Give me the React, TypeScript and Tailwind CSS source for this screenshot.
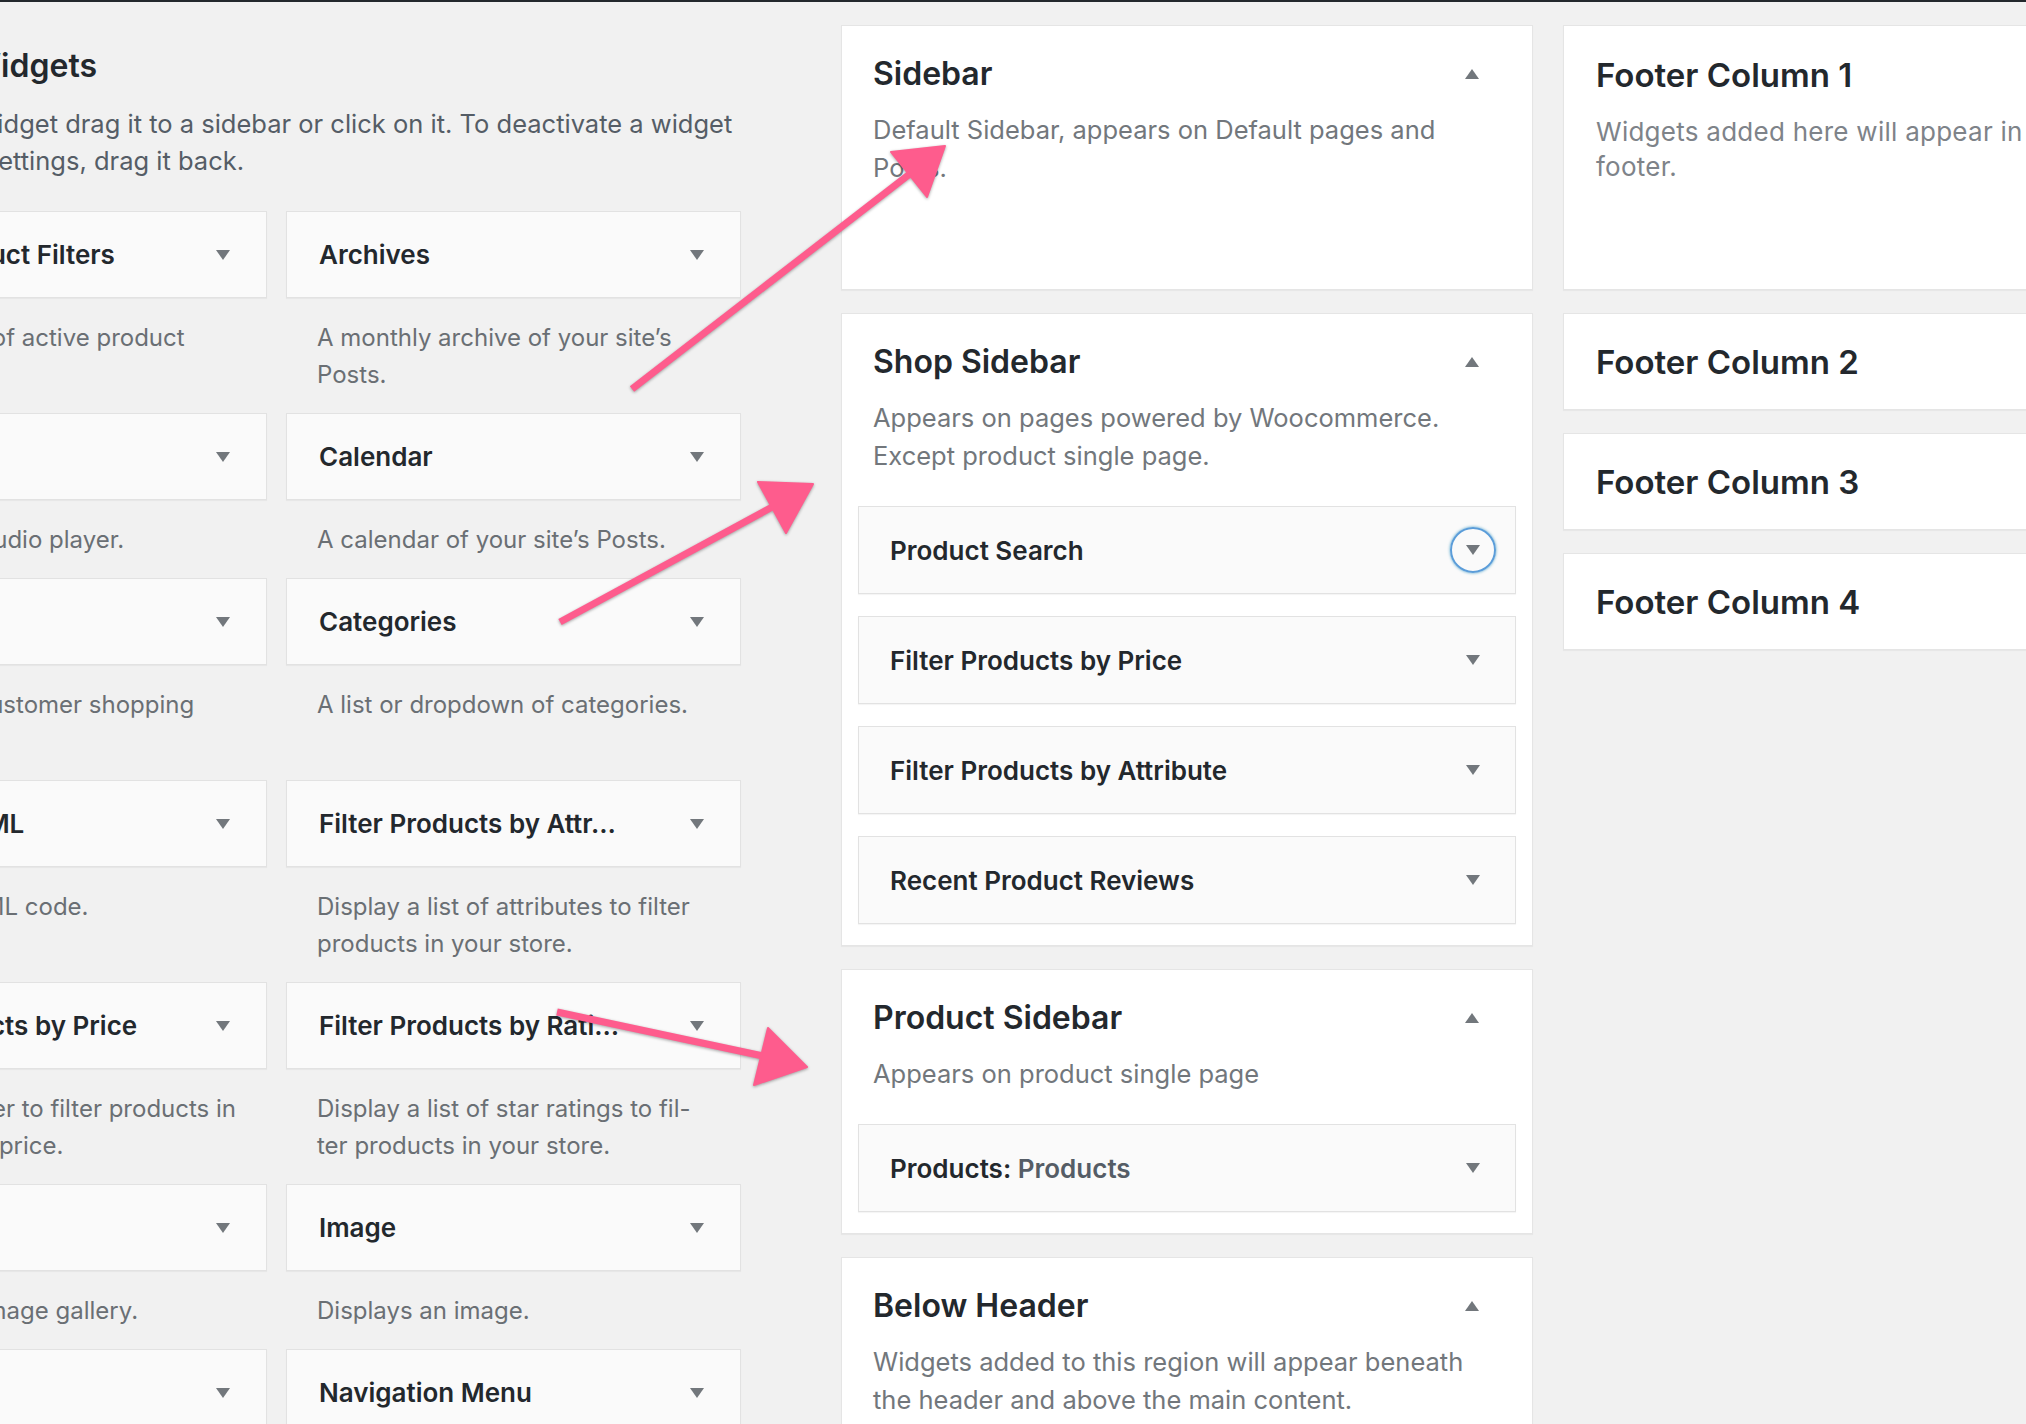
import React from "react";

const Down = () => (
  <svg width="14" height="10" viewBox="0 0 14 10" aria-hidden="true">
    <polygon points="0,0 14,0 7,10" fill="#72777c" />
  </svg>
);

const Up = () => (
  <svg width="14" height="10" viewBox="0 0 14 10" aria-hidden="true">
    <polygon points="0,10 14,10 7,0" fill="#72777c" />
  </svg>
);

type Avail = { title: string; lines: string[] };

const available: Avail[] = [
  { title: "Active Product Filters", lines: ["Display a list of active product", "filters."] },
  { title: "Archives", lines: ["A monthly archive of your site\u2019s", "Posts."] },
  { title: "Audio", lines: ["Displays an audio player."] },
  { title: "Calendar", lines: ["A calendar of your site\u2019s Posts."] },
  { title: "Cart", lines: ["Display the customer shopping", "cart."] },
  { title: "Categories", lines: ["A list or dropdown of categories."] },
  { title: "Custom HTML", lines: ["Arbitrary HTML code."] },
  { title: "Filter Products by Attr\u2026", lines: ["Display a list of attributes to filter", "products in your store."] },
  { title: "Filter Products by Price", lines: ["Display a slider to filter products in", "your store by price."] },
  { title: "Filter Products by Rati\u2026", lines: ["Display a list of star ratings to fil-", "ter products in your store."] },
  { title: "Gallery", lines: ["Displays an image gallery."] },
  { title: "Image", lines: ["Displays an image."] },
  { title: "Meta", lines: ["Login, RSS, & WordPress.org links."] },
  { title: "Navigation Menu", lines: ["Add a navigation menu to your sidebar."] },
];

function AvailWidget({ w }: { w: Avail }) {
  return (
    <div className="pb-[20px]">
      <div className="h-[87px] flex items-center justify-between bg-[#fafafa] border border-[#e2e2e2] shadow-[0_1px_1px_rgba(0,0,0,0.04)] pl-[32px] pr-[20px]">
        <span className="text-[26px] font-semibold text-[#23282d] whitespace-nowrap">{w.title}</span>
        <span className="w-[46px] h-[46px] flex items-center justify-center">
          <Down />
        </span>
      </div>
      <p className="mt-[21px] px-[31px] text-[24px] leading-[37px] text-[#6a6f74] whitespace-nowrap">
        {w.lines.map((l, i) => (
          <span key={i} className="block">
            {l}
          </span>
        ))}
      </p>
    </div>
  );
}

type Inner = { title: string; suffix?: string; focused?: boolean };

function InnerWidget({ w }: { w: Inner }) {
  return (
    <div className="h-[88px] flex items-center justify-between bg-[#fafafa] border border-[#e2e2e2] shadow-[0_1px_1px_rgba(0,0,0,0.04)] pl-[31px] pr-[19px]">
      <span className="text-[26px] font-semibold text-[#23282d] whitespace-nowrap">
        {w.title}
        {w.suffix ? <span className="text-[#555d66]">{w.suffix}</span> : null}
      </span>
      <span
        className={
          w.focused
            ? "w-[46px] h-[46px] flex items-center justify-center rounded-full border-2 border-[#5b9dd9] shadow-[0_0_3px_rgba(30,140,190,0.8)]"
            : "w-[46px] h-[46px] flex items-center justify-center"
        }
      >
        <Down />
      </span>
    </div>
  );
}

function SidebarCard({
  title,
  lines,
  widgets,
  emptyHeight,
}: {
  title: string;
  lines: string[];
  widgets?: Inner[];
  emptyHeight?: string;
}) {
  return (
    <div className="w-[692px] bg-white border border-[#e5e5e5] shadow-[0_1px_1px_rgba(0,0,0,0.04)] px-[16px] pt-[28px] pb-[21px]">
      <div className="flex items-center justify-between pl-[15px] pr-[21px]">
        <h2 className="text-[32px] leading-[40px] font-semibold text-[#23282d]">{title}</h2>
        <span className="w-[46px] flex justify-center">
          <Up />
        </span>
      </div>
      <p className="pl-[15px] mt-[17px] text-[25.5px] leading-[38px] text-[#72777c] whitespace-nowrap">
        {lines.map((l, i) => (
          <span key={i} className="block">
            {l}
          </span>
        ))}
      </p>
      {widgets && widgets.length ? (
        <div className="mt-[31px] flex flex-col gap-[22px]">
          {widgets.map((w) => (
            <InnerWidget key={w.title + (w.suffix || "")} w={w} />
          ))}
        </div>
      ) : (
        <div className={emptyHeight} />
      )}
    </div>
  );
}

function FooterCard({ title, lines }: { title: string; lines?: string[] }) {
  if (lines) {
    return (
      <div className="w-[692px] h-[265px] shrink-0 bg-white border border-[#e5e5e5] shadow-[0_1px_1px_rgba(0,0,0,0.04)] pl-[32px] pt-[29px]">
        <h2 className="text-[33px] leading-[40px] font-semibold text-[#23282d] whitespace-nowrap">{title}</h2>
        <p className="mt-[19px] text-[26px] leading-[35px] tracking-[0.01em] text-[#7e8389] whitespace-nowrap">
          {lines.map((l, i) => (
            <span key={i} className="block">
              {l}
            </span>
          ))}
        </p>
      </div>
    );
  }
  return (
    <div className="w-[692px] h-[97px] shrink-0 flex items-center bg-white border border-[#e5e5e5] shadow-[0_1px_1px_rgba(0,0,0,0.04)] pl-[32px]">
      <h2 className="text-[33px] leading-[40px] font-semibold text-[#23282d] whitespace-nowrap">{title}</h2>
    </div>
  );
}

export default function App() {
  return (
    <div className="relative w-[2026px] h-[1424px] overflow-hidden bg-[#f1f1f1] font-['Inter',sans-serif]">
      <div className="h-[2px] bg-[#23282d]" />
      <div className="flex items-start">
        {/* Available widgets */}
        <div className="-ml-[188px] w-[929px] shrink-0 pt-[46px]">
          <h2 className="pl-[8px] text-[32px] leading-[36px] font-semibold text-[#23282d] whitespace-nowrap">
            Available Widgets
          </h2>
          <p className="pl-[4px] mt-[21px] text-[25.5px] leading-[37px] text-[#555d66] whitespace-nowrap">
            <span className="block">To activate a widget drag it to a sidebar or click on it. To deactivate a widget</span>
            <span className="block">and delete its settings, drag it back.</span>
          </p>
          <div className="mt-[32px] grid grid-cols-[455px_455px] gap-x-[19px]">
            {available.map((w) => (
              <AvailWidget key={w.title} w={w} />
            ))}
          </div>
        </div>

        {/* Middle sidebars */}
        <div className="ml-[100px] shrink-0 pt-[23px] flex flex-col gap-[23px]">
          <SidebarCard
            title="Sidebar"
            lines={["Default Sidebar, appears on Default pages and", "Posts."]}
            emptyHeight="h-[81px]"
          />
          <SidebarCard
            title="Shop Sidebar"
            lines={["Appears on pages powered by Woocommerce.", "Except product single page."]}
            widgets={[
              { title: "Product Search", focused: true },
              { title: "Filter Products by Price" },
              { title: "Filter Products by Attribute" },
              { title: "Recent Product Reviews" },
            ]}
          />
          <SidebarCard
            title="Product Sidebar"
            lines={["Appears on product single page"]}
            widgets={[{ title: "Products:", suffix: " Products" }]}
          />
          <SidebarCard
            title="Below Header"
            lines={["Widgets added to this region will appear beneath", "the header and above the main content."]}
            emptyHeight="h-[81px]"
          />
        </div>

        {/* Right footer columns */}
        <div className="ml-[30px] shrink-0 pt-[23px] flex flex-col gap-[23px]">
          <FooterCard
            title="Footer Column 1"
            lines={["Widgets added here will appear in column 1 of the", "footer."]}
          />
          <FooterCard title="Footer Column 2" />
          <FooterCard title="Footer Column 3" />
          <FooterCard title="Footer Column 4" />
        </div>
      </div>

      {/* Annotation arrows */}
      <svg
        className="absolute inset-0 pointer-events-none drop-shadow-[0_1px_1.5px_rgba(0,0,0,0.35)]"
        width="2026"
        height="1424"
        viewBox="0 0 2026 1424"
        aria-hidden="true"
      >
        <g fill="#fe5c8d" stroke="#fe5c8d" strokeLinejoin="round">
          <line x1="632" y1="389" x2="911" y2="173" strokeWidth="7" />
          <polygon points="891,152 945,146 927,197" strokeWidth="2" />
          <line x1="560" y1="622" x2="774" y2="506" strokeWidth="7" />
          <polygon points="758,482 813,484 786,533" strokeWidth="2" />
          <line x1="557" y1="1012" x2="763" y2="1056" strokeWidth="7" />
          <polygon points="768,1028 807,1067 754,1085" strokeWidth="2" />
        </g>
      </svg>
    </div>
  );
}
